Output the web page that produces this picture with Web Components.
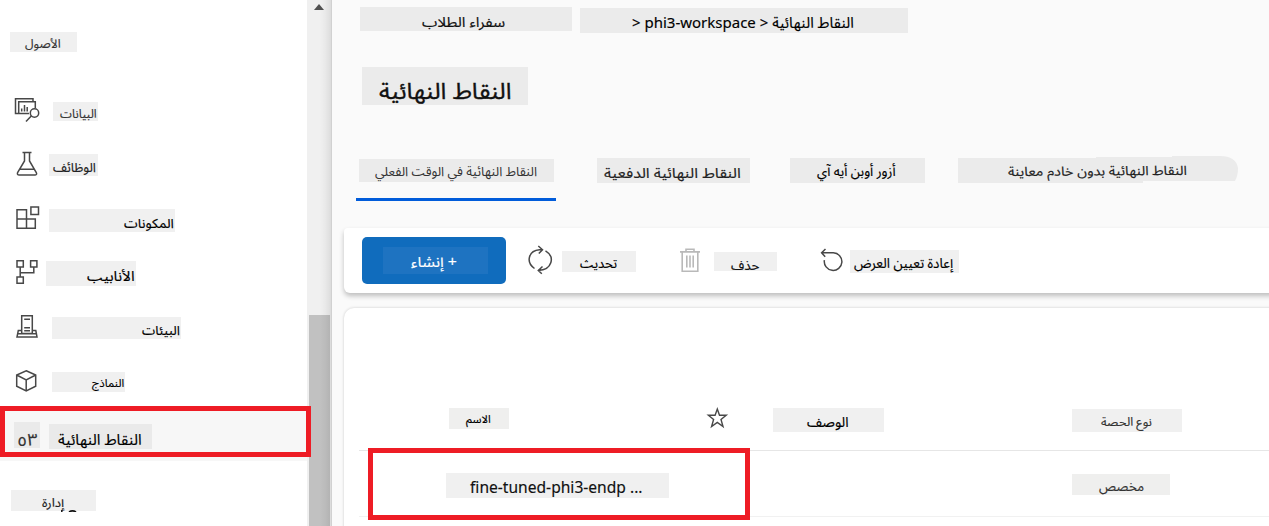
<!DOCTYPE html>
<html lang="ar">
<head>
<meta charset="utf-8">
<title>النقاط النهائية</title>
<style>
body{margin:0;background:#fafafa;font-family:"Noto Sans Arabic","Noto Sans","DejaVu Sans",sans-serif;color:#111;overflow:hidden}
</style>
</head>
<body>
<app-shell>
  <side-nav slot="nav">
    <nav-row style="--h:74px"><ui-label fit="36" style="--l:10px;--t:32px;--w:67px;--h:20px;--x:15px;--b:16px;--fs:12px;color:#333">الأصول</ui-label></nav-row>
    <nav-row style="--h:62px"><ui-icon name="data" slot="icon" style="--l:12px;--t:22px"></ui-icon><ui-label fit="37" style="--l:53px;--t:28px;--w:45px;--h:19px;--x:7px;--b:16px;--fs:12px;color:#333">البيانات</ui-label></nav-row>
    <nav-row style="--h:54px"><ui-icon name="flask" slot="icon" style="--l:12px;--t:14px"></ui-icon><ui-label fit="43" style="--l:49px;--t:18px;--w:49px;--h:22px;--x:4px;--b:18px;--fs:13px;color:#222">الوظائف</ui-label></nav-row>
    <nav-row style="--h:54px"><ui-icon name="blocks" slot="icon" style="--l:12px;--t:14px"></ui-icon><ui-label fit="50" style="--l:49px;--t:19px;--w:126px;--h:23px;--x:75px;--b:19px;--fs:13px;color:#000">المكونات</ui-label></nav-row>
    <nav-row style="--h:54px"><ui-icon name="pipes" slot="icon" style="--l:12px;--t:14px"></ui-icon><ui-label fit="48" style="--l:46px;--t:17px;--w:90px;--h:25px;--x:41px;--b:20px;--fs:14px;color:#000">الأنابيب</ui-label></nav-row>
    <nav-row style="--h:54px"><ui-icon name="server" slot="icon" style="--l:12px;--t:15px"></ui-icon><ui-label fit="38" style="--l:52px;--t:19px;--w:129px;--h:22px;--x:90px;--b:18px;--fs:13px;color:#000">البيئات</ui-label></nav-row>
    <nav-row style="--h:54px"><ui-icon name="cube" slot="icon" style="--l:12px;--t:15px"></ui-icon><ui-label fit="32" style="--l:52px;--t:20px;--w:73px;--h:20px;--x:40px;--b:15px;--fs:11px;color:#000">النماذج</ui-label></nav-row>
    <nav-row selected style="--h:55px"><ui-label fit="20" style="--l:14px;--t:16px;--w:26px;--h:26px;--x:3px;--b:24px;--fs:17px;--bg:#eaeaea;color:#333">٥٣</ui-label><ui-label fit="84" style="--l:9px;--t:18px;--w:103px;--h:25px;--x:9px;--b:21px;--fs:15px;--bg:#eaeaea;color:#000">النقاط النهائية</ui-label></nav-row>
    <nav-row style="--h:65px"><ui-label fit="22" style="--l:11px;--t:29px;--w:85px;--h:21px;--x:31px;--b:17px;--fs:12px;color:#222">إدارة</ui-label><ui-icon name="clipped" style="--l:-36px;--t:48px;--iw:18px;--ih:3px"></ui-icon></nav-row>
  </side-nav>
  <scroll-track slot="scroll"></scroll-track>

  <page-row style="--h:67px">
    <ui-label fit="83" style="--l:28px;--t:7px;--w:212px;--h:24px;--x:62px;--b:20px;--fs:14px;--bg:#ebebeb">سفراء الطلاب</ui-label>
    <ui-label fit="222" style="--l:8px;--t:8px;--w:328px;--h:25px;--x:52px;--b:20px;--fs:15px;--bg:#ebebeb;color:#000">&gt; phi3-workspace &gt; النقاط النهائية</ui-label>
  </page-row>
  <page-row style="--h:85px">
    <ui-label fit="132" style="--l:30px;--t:0px;--w:166px;--h:38px;--x:17px;--b:31.5px;--fs:22.5px;--st:.35px;--bg:#ebebeb">النقاط النهائية</ui-label>
  </page-row>
  <page-row style="--h:76px">
    <tab-item active style="--l:24px"><ui-label fit="162" style="--l:3px;--t:7px;--w:195px;--h:23px;--x:16px;--b:17px;--fs:13px;--st:0px;--bg:#ebebeb;color:#333">النقاط النهائية في الوقت الفعلي</ui-label></tab-item>
    <tab-item style="--l:41px"><ui-label fit="137" style="--l:0px;--t:6px;--w:153px;--h:25px;--x:7px;--b:20px;--fs:14px;--bg:#ebebeb;color:#222">النقاط النهائية الدفعية</ui-label></tab-item>
    <tab-item style="--l:40px"><ui-label fit="79" style="--l:0px;--t:6px;--w:135px;--h:25px;--x:27px;--b:18px;--fs:13px;--bg:#ebebeb;color:#000">أزور أوبن أيه آي</ui-label></tab-item>
    <tab-item style="--l:33px"><ui-label fit="179" tilt="-0.35" style="--l:0px;--t:4px;--w:280px;--h:27px;--x:50px;--b:20px;--fs:13px;--bg:#ebebeb;--clip:path('M0 2H138V1H214V0H262Q278 0 280 12Q280 20 277 25H185V27H0Z');color:#222">النقاط النهائية بدون خادم معاينة</ui-label></tab-item>
  </page-row>
  <tool-bar>
    <primary-button><ui-label fit="46" dir="rtl" style="--w:105px;--h:27px;--x:28px;--b:20px;--fs:14.5px;--bg:#1e73c1;color:#fff">+ إنشاء</ui-label></primary-button>
    <ui-icon name="refresh" style="--l:20px;--t:16px;--iw:28px;--ih:32px"></ui-icon>
    <ui-label fit="37" style="--l:8px;--t:23px;--w:74px;--h:21px;--x:18px;--b:17px;--fs:13px;color:#000">تحديث</ui-label>
    <ui-icon name="trash" style="--l:42px;--t:18px;--iw:24px;--ih:28px"></ui-icon>
    <ui-label fit="28" style="--l:12px;--t:24px;--w:63px;--h:19px;--x:17px;--b:18px;--fs:13px">حذف</ui-label>
    <ui-icon name="reset" style="--l:41px;--t:18px;--iw:28px;--ih:28px"></ui-icon>
    <ui-label fit="99" style="--l:4px;--t:22px;--w:109px;--h:23px;--x:4px;--b:18px;--fs:13.5px;color:#000">إعادة تعيين العرض</ui-label>
  </tool-bar>
  <data-card>
    <table-row slot="head">
      <ui-label fit="25" style="--l:90px;--t:0px;--w:60px;--h:21px;--x:17px;--b:15px;--fs:11px;--bg:#efefee;color:#000">الاسم</ui-label>
      <ui-icon name="star" style="--l:196px;--t:-2px;--iw:24px;--ih:24px"></ui-icon>
      <ui-label fit="42" style="--l:44px;--t:0px;--w:111px;--h:24px;--x:34px;--b:19px;--fs:14px;color:#000">الوصف</ui-label>
      <ui-label fit="51" style="--l:188px;--t:1px;--w:110px;--h:23px;--x:29px;--b:17px;--fs:12px;color:#333">نوع الحصة</ui-label>
    </table-row>
    <table-row slot="body">
      <ui-label fit="173" style="--l:87px;--t:22px;--w:223px;--h:25px;--x:24px;--b:20px;--fs:15.5px">fine-tuned-phi3-endp ...</ui-label>
      <ui-label fit="45" style="--l:403px;--t:23px;--w:98px;--h:21px;--x:27px;--b:17px;--fs:13px;--bg:#efefee;color:#333">مخصص</ui-label>
    </table-row>
  </data-card>
</app-shell>
<script>
const define=(name,html,extra)=>customElements.define(name,class extends HTMLElement{
  constructor(){super();this.attachShadow({mode:'open'}).innerHTML=html}
  connectedCallback(){if(extra)extra(this,this.shadowRoot)}
});
const icons={
data:'<svg viewBox="0 0 28 28"><path d="M8 17.6H3.5V2.7H21V5M23.3 12V5.7H6.7V17.6H17M9.7 15.5V12.5M12.5 15.5V9M15.2 15.5V11"/><circle cx="22.5" cy="17" r="4.2"/><path d="M19.3 20L14 25.5"/></svg>',
flask:'<svg viewBox="0 0 28 28"><path d="M10.5 2.6H19.5M12.5 2.6V11L5.6 22.5Q4.8 25 7.2 25H23.2Q25.3 24.7 24.3 22.5L17.5 11V2.6M8 19.3H22.2"/></svg>',
blocks:'<svg viewBox="0 0 28 28"><path d="M5 5.8H14.5V24.3H5ZM5 15H23.3V24.3H14.5M18.9 2.9H26.5V10.5H18.9Z"/></svg>',
pipes:'<svg viewBox="0 0 28 28"><path d="M5 2.8H11.3V9H5ZM18.6 2.8H24.9V9H18.6ZM5 19H11.3V25.3H5ZM8.2 9V19M8.2 14.7H21.8V9"/></svg>',
server:'<svg viewBox="0 0 28 28"><path d="M9.7 20.5V2.8H20.3V20.5ZM9.5 17.5H6.3L5 24H25L23.8 17.5H20.5M5.5 20.7H24.7M12.2 6.2H18M12.2 14.8H18M12.2 17.7H18"/></svg>',
cube:'<svg viewBox="0 0 28 28"><path d="M14.2 3.7L23.7 8V19.2L14.2 24L4.7 19.2V8ZM4.7 8L14.2 12.8L23.7 8M14.2 12.8V24"/></svg>',
refresh:'<svg viewBox="0 0 28 32"><path d="M8.5 24.5C-.5 18 2.5 6.5 13.5 5.7H16.5M12.3 2L16.5 5.7L12.8 9.5M19.5 6.8C29.5 13 26 26 12.3 26.5M16.5 22.5L12.3 26.5L15.8 29.8"/></svg>',
trash:'<svg viewBox="0 0 24 28" style="stroke:#b9b9b9;stroke-width:1.6"><path d="M2 5.9H22M8 5.5V3.2H16V5.5M4.2 6V25.2H19.8V6M8.8 9.5V21.5M12 9.5V21.5M15.2 9.5V21.5"/></svg>',
reset:'<svg viewBox="0 0 28 28"><path d="M7.5 3L3.6 6.8L7.2 10.8M3.6 6.8H15.3A8.8 8.8 0 1 1 6.4 14.2"/></svg>',
star:'<svg viewBox="0 0 24 24" style="stroke-width:1.4"><path d="M12.3 3L14.5 9.3H21.2L16 13.5L18 20.5L12.3 16.4L6.6 20.5L8.6 13.5L3.4 9.3H10.1Z"/></svg>',
clipped:'<svg viewBox="0 0 18 3" style="stroke:#111"><path d="M1.8 1V3"/><path d="M9 3Q12.5 .8 16 3" style="stroke-width:1.6"/></svg>'
};
define('ui-icon',`<style>:host{display:block;flex:none;width:var(--iw,28px);height:var(--ih,28px);margin:var(--t,0) 0 0 var(--l,0)}svg{display:block;width:100%;height:100%;fill:none;stroke:#484848;stroke-width:1.5}</style><div></div>`,(e,r)=>{r.querySelector('div').innerHTML=icons[e.getAttribute('name')]});
define('ui-label',`<style>
:host{display:block;flex:none;width:var(--w);height:var(--h);margin:var(--t,0) 0 0 var(--l,0)}
div{direction:ltr;display:flex;align-items:baseline;height:100%;background:var(--bg,#f0f0f0);clip-path:var(--clip,none)}
div::before{content:"";height:var(--b);width:var(--x)}
span{display:block;flex:none;white-space:pre;font-size:var(--fs);line-height:1;transform-origin:0 80%;-webkit-text-stroke:var(--st,.15px) currentColor}
:host([dir=rtl]) span{direction:rtl}
</style><div><span><slot></slot></span></div>`,(e,r)=>{
  const s=r.querySelector('span');
  const natural=s.offsetWidth||1;
  s.style.transform=`rotate(${e.getAttribute('tilt')||0}deg) scaleX(${+e.getAttribute('fit')/natural})`;
});
define('nav-row',`<style>:host{display:flex;align-items:flex-start;height:var(--h)}:host([selected]){background:#f7f7f7;position:relative}
:host([selected])::after{content:"";position:absolute;left:0;top:0;width:301px;height:41px;border:5px solid #ee1c25;z-index:3}
.i{width:0;overflow:visible}</style><div class="i"><slot name="icon"></slot></div><slot></slot>`);
define('side-nav',`<style>:host{display:block;width:307px;height:526px;background:#fff}</style><slot></slot>`);
define('scroll-track',`<style>
:host{display:block;box-sizing:border-box;width:25px;height:526px;background:#f0f0f0;padding:4px 2px 0;position:relative}
.up{width:0;height:0;margin-left:5px;border:5.5px solid transparent;border-top:0;border-bottom:6px solid #505050}
.thumb{width:21px;height:211px;margin-top:305px;background:#c1c1c1}
.shade{position:absolute;right:0;top:0;width:12px;height:100%;background:linear-gradient(90deg,#0000,#00000008 45%,#00000014 88%,#00000026 92%,#0000001c)}
</style><div class="up"></div><div class="thumb"></div><div class="shade"></div>`);
define('app-shell',`<style>:host{display:flex;width:1269px;height:526px;overflow:hidden}main{flex:1;min-width:0}</style><slot name="nav"></slot><slot name="scroll"></slot><main><slot></slot></main>`);
define('page-row',`<style>:host{display:flex;align-items:flex-start;height:var(--h)}</style><slot></slot>`);
define('tab-item',`<style>:host{display:block;box-sizing:border-box;height:49px;margin-left:var(--l);overflow:hidden}:host([active]){width:200px;border-bottom:3px solid #015cda}</style><slot></slot>`);
define('primary-button',`<style>:host{display:block;box-sizing:border-box;width:144px;height:47px;margin:9px 0 0 18px;padding:10px 21px;border-radius:5px;background:#106cbd}</style><slot></slot>`);
define('tool-bar',`<style>:host{display:flex;align-items:flex-start;height:65px;margin:0 -8px 0 12px;background:#fff;border-radius:4px 0 0 6px;box-shadow:0 3px 5px #0000003d}</style><slot></slot>`);
define('data-card',`<style>
:host{display:block;box-sizing:border-box;height:230px;margin:15px -8px 0 12px;padding:100px 0 0 15px;background:#fff;border-radius:10px 0 0 0;box-shadow:0 0 3px #00000030}
.head{height:42px;border-bottom:1px solid #e6e6e6}
.body{height:65px;border-bottom:1px solid #f1f1f1;position:relative}
.body::after{content:"";position:absolute;left:9px;top:-3px;width:372px;height:62px;border:5px solid #ee1c25}
</style><div class="head"><slot name="head"></slot></div><div class="body"><slot name="body"></slot></div>`);
define('table-row',`<style>:host{display:flex;align-items:flex-start}</style><slot></slot>`);
</script>
</body>
</html>
